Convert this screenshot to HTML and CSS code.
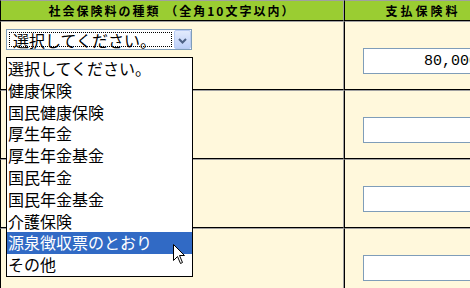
FILE: index.html
```html
<!DOCTYPE html>
<html lang="ja">
<head>
    <meta charset="UTF-8">
    <title>社会保険料控除</title>
    <link rel="stylesheet" href="styles.css">
</head>
<body>
    <div class="sheet">
        <table class="ins-table">
            <tr>
                <th class="col-kind">社会保険料の種類 （全角10文字以内）</th>
                <th class="col-amount">支払保険料</th>
            </tr>
            <tr>
                <td><div class="kind-box">
                    <div class="select">
                        <span class="select-text focused">選択してください。</span>
                        <span class="select-btn"><svg width="9" height="6" viewBox="0 0 9 6"><path d="M1 1 L4.5 4.5 L8 1" fill="none" stroke="#4d6185" stroke-width="2"/></svg></span>
                    </div>
                </div></td>
                <td><div class="amount-box"><input class="amount" type="text" value="80,000"></div></td>
            </tr>
            <tr>
                <td><div class="kind-box"></div></td>
                <td><div class="amount-box"><input class="amount" type="text" value=""></div></td>
            </tr>
            <tr>
                <td><div class="kind-box"></div></td>
                <td><div class="amount-box"><input class="amount" type="text" value=""></div></td>
            </tr>
            <tr>
                <td><div class="kind-box"></div></td>
                <td><div class="amount-box"><input class="amount" type="text" value=""></div></td>
            </tr>
        </table>

        <!-- open dropdown of the first select -->
        <ul class="dropdown">
            <li>選択してください。</li>
            <li>健康保険</li>
            <li>国民健康保険</li>
            <li>厚生年金</li>
            <li>厚生年金基金</li>
            <li>国民年金</li>
            <li>国民年金基金</li>
            <li>介護保険</li>
            <li class="hover">源泉徴収票のとおり</li>
            <li>その他</li>
        </ul>

        <svg class="cursor" width="13" height="21" viewBox="0 0 13 21">
            <path d="M0.5 0.5 L0.5 16.5 L4.5 12.5 L7.5 19.5 L9.5 18.5 L6.5 11.5 L11.5 11.5 Z" fill="#fff" stroke="#000" stroke-width="1"/>
        </svg>
    </div>
</body>
</html>
```

FILE: styles.css
```css
* { margin: 0; padding: 0; box-sizing: border-box; }
body {
    background: #fff;
    overflow: hidden;
    font-family: "Noto Sans CJK JP", "Noto Sans", sans-serif;
}
.sheet { position: relative; width: 502px; }
.ins-table {
    border-collapse: separate;
    border-spacing: 0;
    background: #fff8dc;
}
.ins-table th, .ins-table td {
    border-top: 1px solid #a0a0a0;
    border-left: 1px solid #000;
    border-right: 1px solid #a0a0a0;
    border-bottom: 1px solid #000;
    padding: 0;
    vertical-align: top;
}
.ins-table th {
    background: #9acd32;
    height: 19px;
    font-size: 12px;
    line-height: 19px;
    font-weight: bold;
    color: #000;
    text-align: center;
    white-space: nowrap;
}
.col-kind { width: 344px; letter-spacing: 2px; }
.col-amount { width: 158px; letter-spacing: 3px; }
.kind-box { height: 67px; padding: 7px 0 0 5px; }
.amount-box { height: 67px; padding: 26px 19px 0 18px; }

.select {
    width: 186px;
    height: 21px;
    border: 1px solid #7f9db9;
    background: #fff;
    display: flex;
    align-items: stretch;
}
.select-text {
    flex: 1;
    margin: 2px;
    border: 1px dotted transparent;
    font-size: 16px;
    line-height: 15px;
    padding-left: 3px;
    color: #000;
    white-space: nowrap;
}
.select-text.focused { border-color: #000; }
.select-btn {
    width: 17px;
    border: 1px solid #b8cbf2;
    border-radius: 2px;
    background: linear-gradient(to bottom, #e3ebfd, #bccff8);
    display: flex;
    align-items: center;
    justify-content: center;
    padding-top: 3px;
}

.amount {
    display: block;
    width: 100%;
    height: 26px;
    border: 1px solid #7f9db9;
    background: #fff;
    font-family: "Liberation Mono", monospace;
    font-size: 15px;
    text-align: right;
    padding: 0 3px;
    color: #000;
    outline: none;
}

.dropdown {
    position: absolute;
    left: 6px;
    top: 57px;
    width: 187px;
    border: 1px solid #000;
    background: #fff;
    list-style: none;
}
.dropdown li {
    height: 21.8px;
    line-height: 21.8px;
    font-size: 16px;
    padding-left: 1px;
    color: #000;
    white-space: nowrap;
}
.dropdown li.hover { background: #316ac5; color: #fff; }

.cursor {
    position: absolute;
    left: 173px;
    top: 244px;
}
```
